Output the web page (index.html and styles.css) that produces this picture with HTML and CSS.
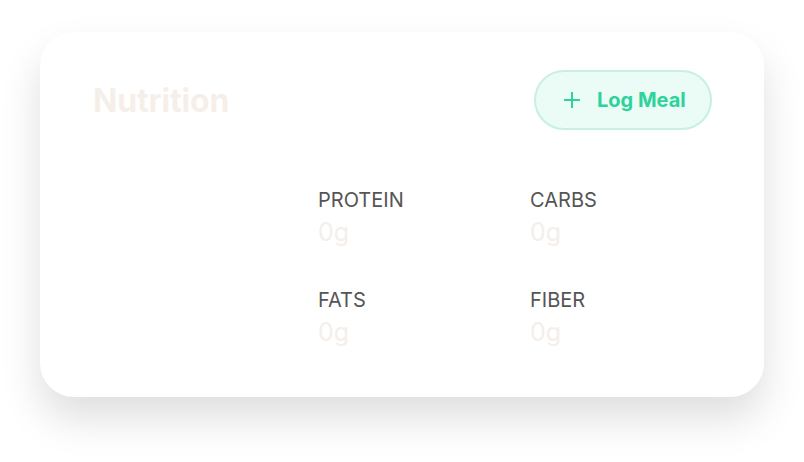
FILE: index.html
```html
<!DOCTYPE html>
<html>
<head>
<meta charset="utf-8">
<link rel="stylesheet" href="styles.css">
</head>
<body>
<div class="card">
  <div class="header">
    <h2 class="title">Nutrition</h2>
    <button class="log-btn">
      <svg class="plus" width="18" height="18" viewBox="0 0 18 18"><path d="M9 1v16M1 9h16" stroke="#2dd39a" stroke-width="2" fill="none"/></svg>
      <span>Log Meal</span>
    </button>
  </div>
  <div class="body">
    <div class="chart"></div>
    <div class="macros">
      <div class="macro"><div class="label">PROTEIN</div><div class="value">0g</div></div>
      <div class="macro"><div class="label">CARBS</div><div class="value">0g</div></div>
      <div class="macro"><div class="label">FATS</div><div class="value">0g</div></div>
      <div class="macro"><div class="label">FIBER</div><div class="value">0g</div></div>
    </div>
  </div>
</div>
</body>
</html>
```

FILE: styles.css
```css
* { box-sizing: border-box; }
html { min-height: 100%; background: #ffffff; }
html, body { margin: 0; padding: 0; }
body {
  min-height: 462px;
  padding: 32px 40px;
  font-family: Inter, "Noto Sans", sans-serif;
  background: #ffffff;
}
.card {
  width: 724px;
  height: 365px;
  background: #ffffff;
  border-radius: 34px;
  box-shadow: 0 22px 40px rgba(0, 0, 0, 0.13);
  padding: 38px 52px 0 53px;
}
.header {
  display: flex;
  justify-content: space-between;
  align-items: center;
  height: 60px;
}
.title {
  margin: 0;
  font-size: 32px;
  font-weight: 700;
  color: #f6efe9;
  letter-spacing: -0.2px;
}
.log-btn {
  display: flex;
  align-items: center;
  gap: 16px;
  height: 60px;
  width: 178px;
  padding: 0 0 0 27px;
  border: 2px solid #c6f1e1;
  background: #ebfbf5;
  border-radius: 30px;
  font-family: inherit;
  font-size: 20px;
  font-weight: 700;
  color: #2dd39a;
}
.plus { flex: none; }
.body {
  display: flex;
  margin-top: 58px;
}
.chart { width: 225px; flex: none; }
.macros {
  display: grid;
  grid-template-columns: 212px 212px;
  row-gap: 41px;
}
.label {
  font-size: 20px;
  line-height: 24px;
  color: #555555;
}
.value {
  font-size: 25px;
  line-height: 30px;
  color: #f5eee9;
  margin-top: 5px;
}
```
